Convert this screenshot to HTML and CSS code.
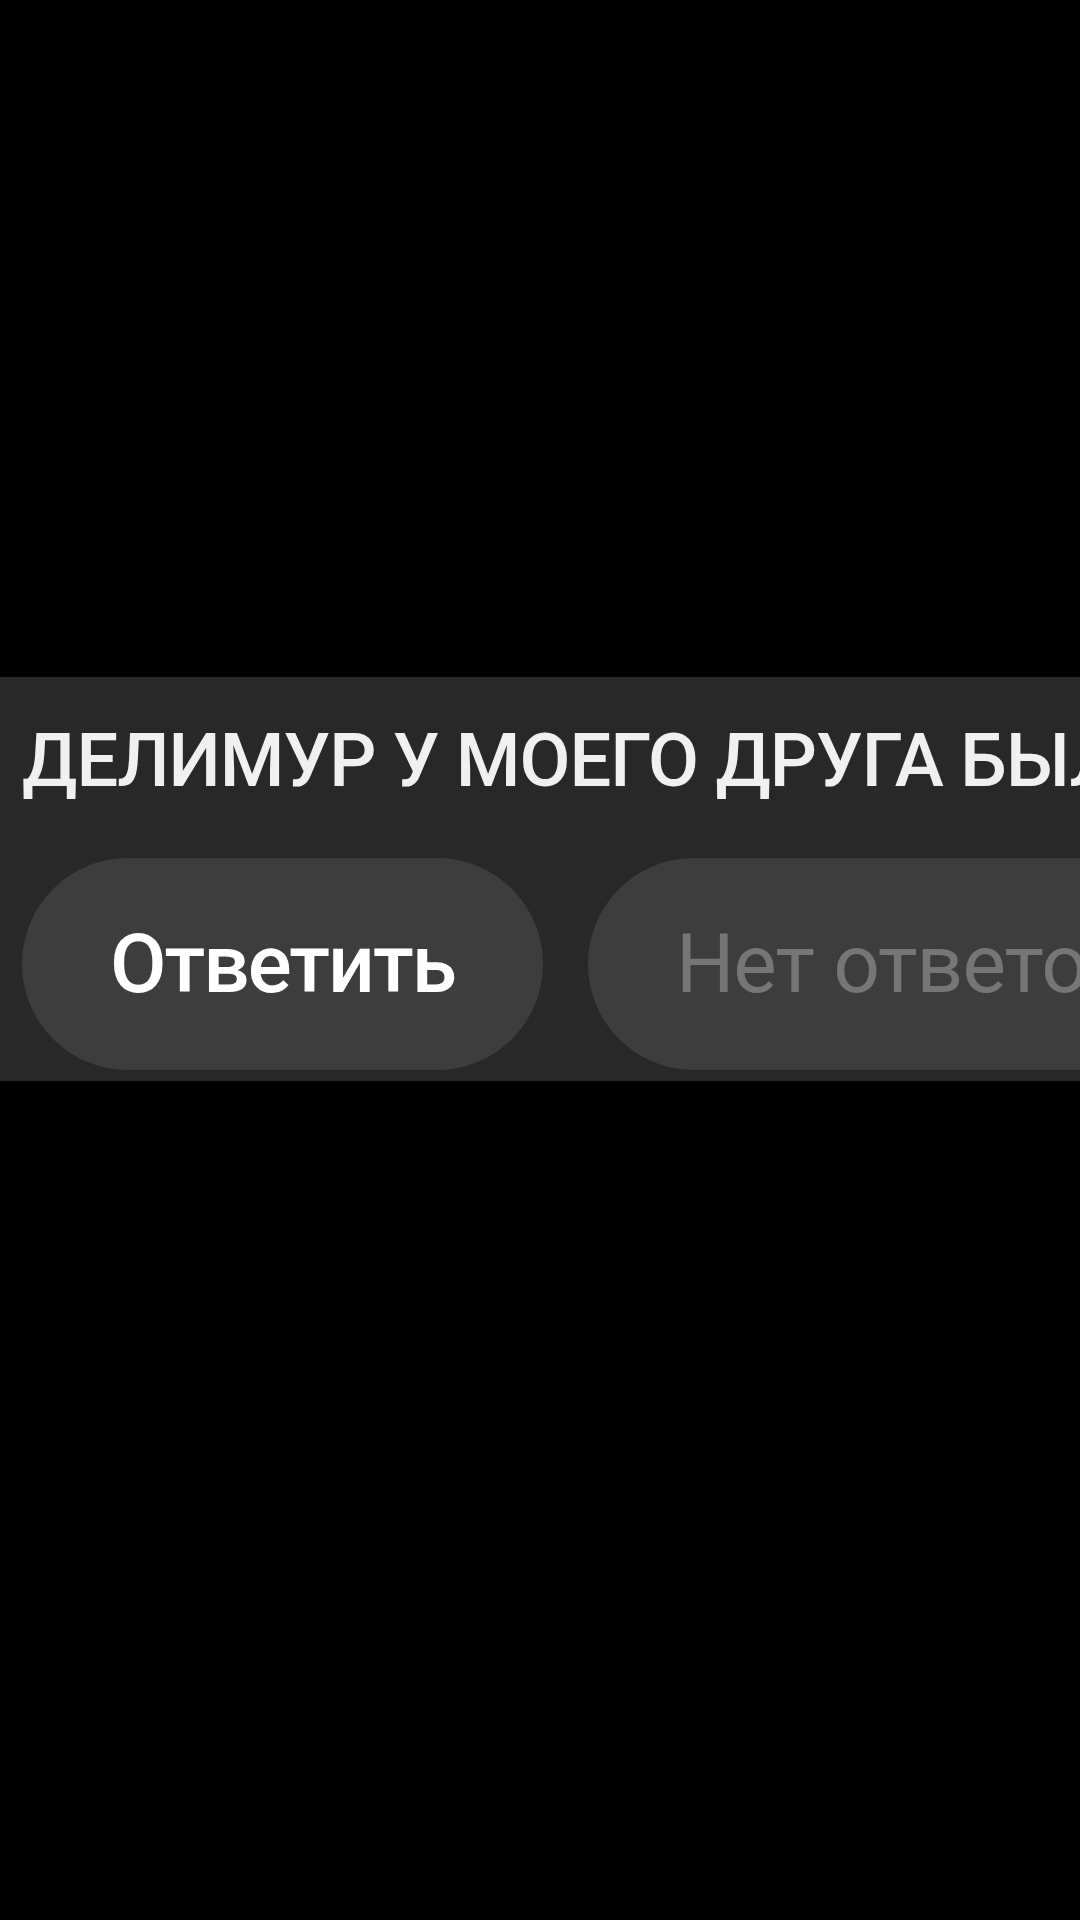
FILE: index.html
```html
<!DOCTYPE html>
<html lang="ru">
<head>
<meta charset="utf-8">
<link rel="stylesheet" href="styles.css">
</head>
<body>
<div class="screen">
  <section class="comment">
    <p class="comment-text">ДЕЛИМУР У МОЕГО ДРУГА БЫЛ ТАКОЙ ЖЕ</p>
    <div class="actions">
      <button class="pill pill-primary">Ответить</button>
      <button class="pill pill-muted">Нет ответов</button>
    </div>
  </section>
</div>
</body>
</html>
```

FILE: styles.css
```css
html, body {
  margin: 0;
  padding: 0;
  background: #000;
}
.screen {
  width: 1080px;
  height: 1920px;
  overflow: hidden;
  background: #000;
  display: flex;
  flex-direction: column;
  padding-top: 677px;
  box-sizing: border-box;
}
.comment {
  background: #282828;
  padding: 41px 0 11px 22px;
  overflow: hidden;
}
.comment-text {
  margin: 0;
  font-family: Roboto, "Noto Sans", sans-serif;
  font-size: 74px;
  line-height: 1.172;
  font-weight: 500;
  letter-spacing: -1px;
  color: #f0f0f0;
  white-space: nowrap;
}
.actions {
  display: flex;
  gap: 45px;
  margin-top: 53px;
}
.pill {
  flex: none;
  height: 212px;
  border: none;
  border-radius: 106px;
  background: #3d3d3d;
  font-family: Roboto, "Noto Sans", sans-serif;
  font-size: 82px;
  line-height: 1.172;
  letter-spacing: -2px;
  padding: 0 88px;
  white-space: nowrap;
}
.pill-primary {
  color: #fff;
  font-weight: 500;
}
.pill-muted {
  color: #767676;
  font-weight: 400;
  letter-spacing: -1px;
}
```
